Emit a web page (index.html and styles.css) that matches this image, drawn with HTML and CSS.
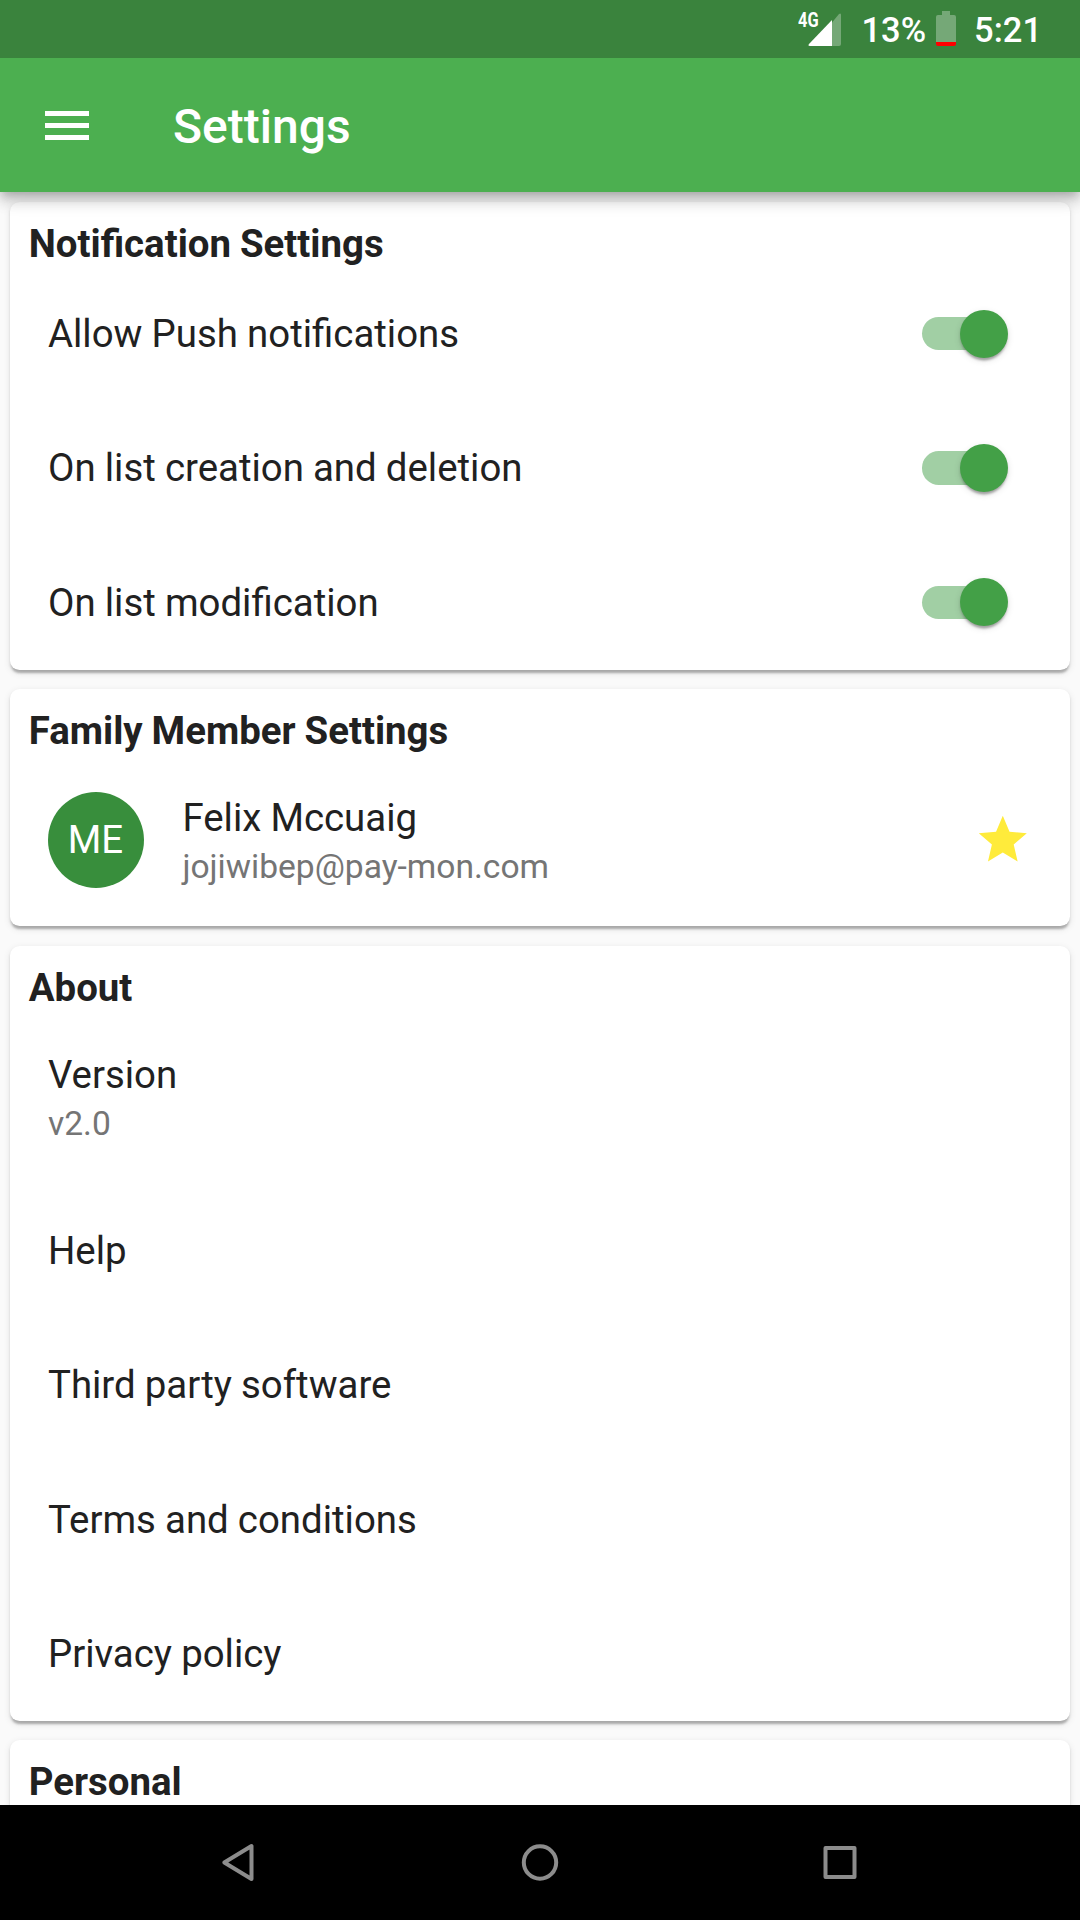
FILE: index.html
```html
<!DOCTYPE html>
<html lang="en">
<head>
<meta charset="utf-8">
<title>Settings</title>
<link rel="stylesheet" href="styles.css">
</head>
<body>
<div class="screen">
  <header class="top">
    <div class="status-bar">
      <span class="network">4G</span>
      <svg class="signal" width="34" height="34" viewBox="0 0 34 34">
        <path d="M24 9.500 31 1Q33 -.5 33 2V31Q33 33 31 33H24Z" fill="#fff" fill-opacity=".3"/>
        <path d="M24 7V33H2Q-.5 33 1 31Z" fill="#fff"/>
      </svg>
      <span class="percent">13%</span>
      <svg class="battery" width="20" height="35" viewBox="0 0 20 35">
        <path d="M6 0H14V4H18Q20 4 20 6V31H0V6Q0 4 2 4H6Z" fill="#fff" fill-opacity=".3"/>
        <path d="M0 31H20V33Q20 35 18 35H2Q0 35 0 33Z" fill="#f00"/>
      </svg>
      <span class="clock">5:21</span>
    </div>
    <div class="app-bar">
      <svg class="menu" width="44" height="29" viewBox="0 0 44 29" fill="#fff">
        <path d="M0 0H44V5H0ZM0 12H44V17H0ZM0 24H44V29H0Z"/>
      </svg>
      <h1 class="title">Settings</h1>
    </div>
  </header>

  <main class="content">
    <section class="card">
      <h2 class="heading">Notification Settings</h2>
      <div class="row"><span class="label">Allow Push notifications</span><span class="switch"><i class="thumb"></i></span></div>
      <div class="row"><span class="label">On list creation and deletion</span><span class="switch"><i class="thumb"></i></span></div>
      <div class="row"><span class="label">On list modification</span><span class="switch"><i class="thumb"></i></span></div>
    </section>

    <section class="card">
      <h2 class="heading">Family Member Settings</h2>
      <div class="row row-tall">
        <span class="avatar">ME</span>
        <div class="lines">
          <span class="label">Felix Mccuaig</span>
          <span class="detail">jojiwibep@pay-mon.com</span>
        </div>
        <svg class="star" viewBox="0 0 24 24" fill="#ffeb3b"><path d="M12 17.270L18.180 21l-1.640-7.030L22 9.240l-7.190-.61L12 2 9.190 8.630 2 9.240l5.460 4.730L5.820 21z"/></svg>
      </div>
    </section>

    <section class="card">
      <h2 class="heading">About</h2>
      <div class="row row-tall">
        <div class="lines">
          <span class="label">Version</span>
          <span class="detail">v2.0</span>
        </div>
      </div>
      <div class="row"><span class="label">Help</span></div>
      <div class="row"><span class="label">Third party software</span></div>
      <div class="row"><span class="label">Terms and conditions</span></div>
      <div class="row"><span class="label">Privacy policy</span></div>
    </section>

    <section class="card">
      <h2 class="heading">Personal</h2>
      <div class="row"></div>
    </section>
  </main>

  <nav class="nav-bar">
    <svg width="60" height="60" viewBox="0 0 60 60"><path d="M41.500 16V49L14.300 32.500Z"/></svg>
    <svg width="60" height="60" viewBox="0 0 60 60"><circle cx="30" cy="32.500" r="16.200"/></svg>
    <svg width="60" height="60" viewBox="0 0 60 60"><rect x="15.500" y="18" width="29" height="29"/></svg>
  </nav>
</div>
</body>
</html>
```
FILE: styles.css
```css
* { box-sizing: border-box; }

body {
  margin: 0;
  font-family: Roboto, sans-serif;
  color: #212121;
  background: #fafafa;
}

.screen {
  width: 1080px;
  height: 1920px;
  display: flex;
  flex-direction: column;
  overflow: hidden;
}

.top {
  flex: none;
  position: relative;
  z-index: 1;
  color: #fff;
  background: #4caf50;
  box-shadow: 0 4.8px 9.6px -2.4px rgba(0, 0, 0, .2), 0 9.6px 12px rgba(0, 0, 0, .14), 0 2.4px 24px rgba(0, 0, 0, .12);
}

.status-bar {
  height: 58px;
  padding-right: 38px;
  display: flex;
  justify-content: flex-end;
  align-items: center;
  background: #3a833d;
  font-size: 34.5px;
  font-weight: 500;
  line-height: 58px;
}

.percent,
.clock {
  height: 58px;
  line-height: 60px;
}

.network {
  width: 10px;
  height: 58px;
  font-size: 21px;
  font-weight: 700;
  line-height: 40px;
  transform: scaleX(.78);
  transform-origin: left;
}

.signal {
  margin-top: 2px;
  margin-right: 19px;
}

.percent { margin-right: 10px; }

.battery {
  margin-right: 18px;
  margin-bottom: 1px;
}

.app-bar {
  height: 134px;
  padding-left: 45px;
  display: flex;
  align-items: center;
}

.title {
  margin: 4px 0 0 84px;
  font-size: 48px;
  font-weight: 500;
  line-height: 56px;
}

.content {
  flex: 1;
  min-height: 0;
  overflow: hidden;
  padding: 9.6px;
  display: flex;
  flex-direction: column;
  gap: 19.2px;
}

.card {
  flex: none;
  background: #fff;
  border-radius: 9.6px;
  box-shadow: 0 4.8px 2.4px -2.4px rgba(0, 0, 0, .17), 0 2.4px 2.4px rgba(0, 0, 0, .12), 0 2.4px 7.2px rgba(0, 0, 0, .1);
}

.heading {
  height: 64.8px;
  margin: 0;
  padding: 19.2px 19.2px 0;
  font-size: 38.4px;
  font-weight: 700;
  line-height: 45.6px;
  word-spacing: -.6px;
}

.row {
  height: 134.4px;
  padding: 0 38.4px;
  display: flex;
  align-items: center;
}

.row-tall { height: 172.8px; }

.label {
  font-size: 38.4px;
  line-height: 45px;
  word-spacing: -.4px;
}

.detail {
  font-size: 33.6px;
  line-height: 40px;
  color: #757575;
}

.lines {
  padding-top: 2.4px;
  display: flex;
  flex-direction: column;
  gap: 7px;
}

.switch {
  width: 79.2px;
  height: 33.6px;
  margin: 0 31.2px 0 auto;
  display: flex;
  align-items: center;
  justify-content: flex-end;
  border-radius: 16.8px;
  background: #a1cfa4;
}

.thumb {
  flex: none;
  width: 48px;
  height: 48px;
  margin-right: -7.2px;
  border-radius: 50%;
  background: #43a047;
  box-shadow: 0 4.8px 2.4px -2.4px rgba(0, 0, 0, .2), 0 2.4px 2.4px rgba(0, 0, 0, .14), 0 2.4px 7.2px rgba(0, 0, 0, .12);
}

.avatar {
  width: 96px;
  height: 96px;
  margin-right: 38.4px;
  padding-right: 1px;
  border-radius: 50%;
  background: #388e3c;
  color: #fff;
  font-size: 38.4px;
  line-height: 96px;
  text-align: center;
}

.star {
  width: 57.6px;
  height: 57.6px;
  margin-left: auto;
}

.nav-bar {
  flex: none;
  height: 115px;
  padding: 25px 210px 0;
  display: flex;
  justify-content: space-between;
  background: #000;
}

.nav-bar svg {
  fill: none;
  stroke: #8c8c8c;
  stroke-width: 4;
  stroke-linejoin: round;
}
```
